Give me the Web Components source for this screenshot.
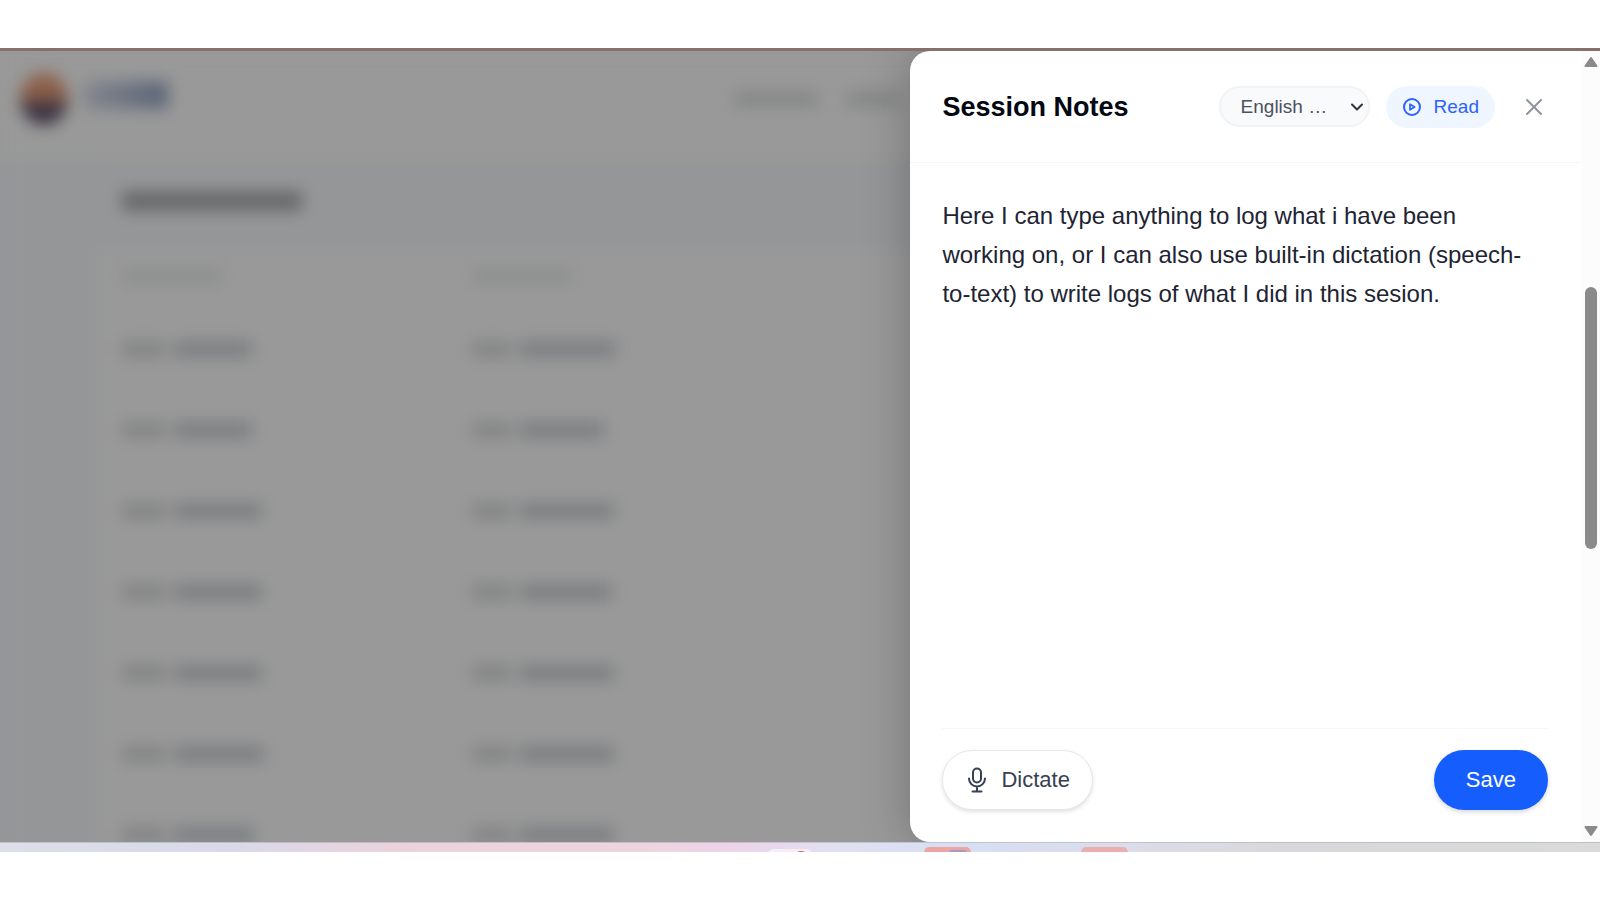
<!DOCTYPE html>
<html lang="en">
<head>
<meta charset="utf-8">
<meta name="viewport" content="width=device-width, initial-scale=1">
<title>Session Notes</title>
<style>
	body {
		margin: 0;
		background: #fff;
		color: #1e2433;
		font-family: "Liberation Sans", Arial, sans-serif;
	}
</style>
</head>
<body>
<notes-app>
	<history-page slot="page"></history-page>
	<notes-drawer>
		<span slot="title">Session Notes</span>
		<language-select slot="tools"></language-select>
		<pill-button slot="tools" kind="read">
			<svg slot="icon" width="20" height="20" viewBox="0 0 20 20" fill="none" stroke="currentColor" stroke-width="2" stroke-linejoin="round"><circle cx="10" cy="10" r="8"/><path d="M8 7.2v5.6l4.6-2.8z" stroke-width="1.7"/></svg>
			Read
		</pill-button>
		<pill-button slot="tools" kind="close" label="Close">
			<svg slot="icon" width="24" height="24" viewBox="0 0 24 24" fill="none" stroke="currentColor" stroke-width="2" stroke-linecap="round"><path d="M5 5l14 14M19 5L5 19"/></svg>
		</pill-button>
		<notes-editor></notes-editor>
		<pill-button slot="actions" kind="dictate">
			<svg slot="icon" width="24" height="26" viewBox="0 0 24 26" fill="none" stroke="currentColor" stroke-width="2" stroke-linecap="round" stroke-linejoin="round"><rect x="8" y="1.5" width="8" height="14" rx="4"/><path d="M4 11.5a8 8 0 0 0 16 0M12 19.5v4M7.500 24.5h9"/></svg>
			Dictate
		</pill-button>
		<pill-button slot="actions" kind="save">Save</pill-button>
	</notes-drawer>
	<window-edge slot="edge"></window-edge>
</notes-app>

<script>
/**
 * Base: put the static markup of the class in an open shadow root
 */
class BaseElement extends HTMLElement {
	static markup = '';

	constructor() {
		super();
		this.attachShadow({ mode: 'open' });
		this.shadowRoot.innerHTML = this.constructor.markup;
	}
}

/**
 * The frame: the page and the drawer share one stage
 */
class NotesApp extends BaseElement {
	static markup = `
		<style>
			:host {
				display: flex;
				flex-direction: column;
				box-sizing: border-box;
				min-height: 100vh;
				padding: 48px 0;
			}

			.stage {
				flex: 1;
				display: grid;
				grid-template: minmax(0, 1fr) / 569fr 431fr;
				border-top: 3px solid #84716a;
				background: #999;
				overflow: hidden;
			}

			slot[name=page]::slotted(*) {
				grid-area: 1 / 1 / 2 / 3;
			}

			slot:not([name])::slotted(*) {
				grid-area: 1 / 2 / 2 / 3;
				z-index: 1;
			}
		</style>
		<div class="stage">
			<slot name="page"></slot>
			<slot></slot>
		</div>
		<slot name="edge"></slot>
	`;
}

/**
 * The dimmed and blurred page behind the drawer
 */
class HistoryPage extends BaseElement {
	// [first column, second column], each: width of the date, width of the hour
	static #rows = [
		[[44, 78], [40, 96]],
		[[44, 78], [40, 84]],
		[[44, 88], [40, 94]],
		[[44, 88], [40, 92]],
		[[44, 88], [40, 94]],
		[[44, 90], [40, 94]],
		[[44, 80], [40, 94]],
	];

	static markup = `
		<style>
			:host {
				display: block;
				min-width: 0;
				height: 0;
				min-height: 100%;
				overflow: hidden;
				background: linear-gradient(#999 110px, #949698 110px);
			}

			.blurred {
				filter: blur(8px);
			}

			header {
				display: flex;
				align-items: center;
				gap: 16px;
				height: 96px;
				padding: 0 700px 12px 20px;
				background: #999;
			}

			i {
				display: block;
				height: 16px;
				background: #7c7e81;
			}

			.logo {
				width: 48px;
				height: 52px;
				border-radius: 50%;
				background: linear-gradient(#8c5f49 45%, #3a3342 65%);
			}

			.name {
				width: 84px;
				height: 28px;
				background: linear-gradient(90deg, #83868c, #5a6376);
				margin: 0 auto 8px 0;
			}

			nav {
				display: flex;
				gap: 28px;
			}

			nav i {
				width: 84px;
				background: #868788;
			}

			nav i + i {
				width: 54px;
			}

			main {
				background: #949698;
				padding-left: 96px;
			}

			.title {
				display: flex;
				align-items: center;
				height: 90px;
				padding: 0 0 16px 26px;
				border-top: 10px solid #969696;
				box-sizing: border-box;
			}

			.title i {
				width: 180px;
				height: 20px;
				background: #666969;
			}

			.row {
				display: grid;
				grid-template-columns: 350px 1fr;
				align-items: center;
				box-sizing: border-box;
				height: 81px;
				padding-left: 26px;
				background: #999;
				border-bottom: 2px solid #969696;
			}

			.row.head {
				height: 60px;
				padding-bottom: 4px;
			}

			.head i {
				width: 100px;
				background: #8e8f90;
			}

			.cell {
				display: flex;
				gap: 8px;
			}

			.cell i:first-child {
				background: #838485;
			}
		</style>
		<div class="blurred" aria-hidden="true">
			<header>
				<i class="logo"></i>
				<i class="name"></i>
				<nav><i></i><i></i></nav>
			</header>
			<main>
				<div class="title"><i></i></div>
				<div class="row head"><i></i><i></i></div>
			</main>
		</div>
	`;

	constructor() {
		super();
		const main = this.shadowRoot.querySelector('main');
		HistoryPage.#rows.forEach(cells => {
			const row = document.createElement('div');
			row.className = 'row';
			row.innerHTML = cells.map(([date, hour]) => `
				<div class="cell"><i style="width: ${date}px"></i><i style="width: ${hour}px"></i></div>
			`).join('');
			main.appendChild(row);
		});
	}
}

/**
 * The drawer: header with tools, content, actions, and its scroll bar
 */
class NotesDrawer extends BaseElement {
	static markup = `
		<style>
			:host {
				display: grid;
				grid-template-columns: minmax(0, 1fr) 18px;
				min-width: 0;
				background: #fff;
				border-radius: 20px 0 0 20px;
				box-shadow: 0 0 48px rgba(0, 0, 0, 0.25);
				overflow: hidden;
			}

			.panel {
				display: flex;
				flex-direction: column;
			}

			header {
				display: flex;
				align-items: center;
				gap: 16px;
				box-sizing: border-box;
				height: 112px;
				padding: 0 25px 0 32px;
				border-bottom: 1px solid #f6f7f8;
			}

			h2 {
				flex: 1;
				margin: 0;
				color: #030712;
				font-size: 27px;
				line-height: 32px;
				white-space: nowrap;
			}

			.content {
				flex: 1;
				display: flex;
				padding: 28px 34px 0 32px;
			}

			.content ::slotted(*) {
				flex: 1;
			}

			footer {
				display: flex;
				align-items: center;
				justify-content: space-between;
				margin: 0 34px 0 32px;
				padding: 21px 0 32px;
				border-top: 1px solid #f6f7f8;
			}
		</style>
		<section class="panel">
			<header>
				<h2><slot name="title"></slot></h2>
				<slot name="tools"></slot>
			</header>
			<div class="content"><slot></slot></div>
			<footer><slot name="actions"></slot></footer>
		</section>
		<scroll-rail></scroll-rail>
	`;
}

class ScrollRail extends BaseElement {
	static markup = `
		<style>
			:host {
				display: grid;
				grid-template-rows: 22px 214fr 262fr 271fr 22px;
				justify-items: center;
				background: #fcfcfc;
				color: #8a8a8a;
			}

			.thumb {
				grid-row: 3;
				width: 12px;
				border-radius: 6px;
				background: currentColor;
			}

			svg {
				align-self: center;
			}

			.down {
				grid-row: 5;
			}
		</style>
		<svg width="14" height="12" viewBox="0 0 14 12" fill="currentColor" stroke="currentColor" stroke-width="2" stroke-linejoin="round"><path d="M7 2l5.5 8h-11z"/></svg>
		<div class="thumb"></div>
		<svg class="down" width="14" height="12" viewBox="0 0 14 12" fill="currentColor" stroke="currentColor" stroke-width="2" stroke-linejoin="round"><path d="M7 10L1.500 2h11z"/></svg>
	`;
}

class LanguageSelect extends BaseElement {
	static markup = `
		<style>
			:host {
				display: grid;
				align-items: center;
				width: 151px;
			}

			select, svg {
				grid-area: 1 / 1;
			}

			select {
				appearance: none;
				box-sizing: border-box;
				width: 100%;
				height: 41px;
				padding: 0 32px 0 20px;
				border: 2px solid #f1f3f4;
				border-radius: 21px;
				background: #f9fafb;
				color: #4a5160;
				font: 19px/24px "Liberation Sans", Arial, sans-serif;
				text-overflow: ellipsis;
			}

			svg {
				justify-self: end;
				margin-right: 6px;
				pointer-events: none;
			}
		</style>
		<select aria-label="Language"><option>English …</option></select>
		<svg width="14" height="10" viewBox="0 0 14 10" fill="none" stroke="#30343b" stroke-width="2" stroke-linecap="round" stroke-linejoin="round"><path d="M2 2.500l5 5 5-5"/></svg>
	`;
}

/**
 * A rounded button, its look is given by the attribute "kind"
 */
class PillButton extends BaseElement {
	static markup = `
		<style>
			:host {
				display: block;
			}

			button {
				display: flex;
				align-items: center;
				justify-content: center;
				gap: 12px;
				box-sizing: border-box;
				height: 60px;
				padding: 0 22px;
				border: 0;
				border-radius: 30px;
				background: #fff;
				color: #364153;
				font: 22px/28px "Liberation Sans", Arial, sans-serif;
				white-space: nowrap;
			}

			:host([kind=read]) button {
				height: 42px;
				padding: 0 16px;
				background: #eff6ff;
				color: #2b63f8;
				font-size: 19px;
			}

			:host([kind=close]) button {
				height: 46px;
				padding: 0 11px;
				color: #8f939d;
			}

			:host([kind=dictate]) button {
				border: 1px solid #e5e7eb;
				box-shadow: 0 2px 4px rgba(0, 0, 0, 0.12);
			}

			:host([kind=save]) button {
				padding: 0 32px;
				background: #155dfc;
				color: #fff;
				box-shadow: 0 2px 5px rgba(0, 0, 0, 0.16);
			}
		</style>
		<button type="button"><slot name="icon"></slot><span><slot></slot></span></button>
	`;

	connectedCallback() {
		if (this.hasAttribute('label')) {
			this.shadowRoot.querySelector('button').setAttribute('aria-label', this.getAttribute('label'));
			// icon only
			this.shadowRoot.querySelector('span').remove();
		}
	}
}

class NotesEditor extends BaseElement {
	static markup = `
		<style>
			:host {
				display: flex;
			}

			textarea {
				flex: 1;
				min-width: 0;
				padding: 5px 16px 5px 0;
				border: 0;
				outline: 0;
				resize: none;
				background: none;
				color: #1e2433;
				font: 24px/39px "Liberation Sans", Arial, sans-serif;
			}
		</style>
		<textarea aria-label="Session notes">Here I can type anything to log what i have been working on, or I can also use built-in dictation (speech-to-text) to write logs of what I did in this sesion.</textarea>
	`;
}

/**
 * The thin strip of the desktop that shows under the window
 */
class WindowEdge extends BaseElement {
	static markup = `
		<style>
			:host {
				display: block;
				height: 10px;
				background: linear-gradient(90deg, #dcdfe8, #d9d9ea 14%, #ead3dc 25%, #edd5df 40%, #ecd4ea 46%, #e0e0f2 52%, #d7dff2 61%, #dcdcea 71%, #d8d8dc 80%, #d9dad9);
			}

			svg {
				display: block;
				width: 100%;
				height: 100%;
			}
		</style>
		<svg viewBox="0 0 1600 10" preserveAspectRatio="none">
			<path d="M0 0h1600v1H0z" fill="#000" opacity="0.12"/>
			<path d="M768 10l4-3h36l4 3z" fill="#f5eef6"/>
			<path d="M797 10q4-2 8 0z" fill="#cf6a55"/>
			<path d="M924 10q1-5 5-5h37q4 0 5 5z" fill="#eda5a3"/>
			<path d="M949 10q1-2 3-2h12q2 0 3 2z" fill="#a59ac4"/>
			<path d="M1081 10q1-5 5-5h37q4 0 5 5z" fill="#eab0b0"/>
		</svg>
	`;
}

customElements.define('notes-app', NotesApp);
customElements.define('history-page', HistoryPage);
customElements.define('notes-drawer', NotesDrawer);
customElements.define('scroll-rail', ScrollRail);
customElements.define('language-select', LanguageSelect);
customElements.define('pill-button', PillButton);
customElements.define('notes-editor', NotesEditor);
customElements.define('window-edge', WindowEdge);
</script>
</body>
</html>
